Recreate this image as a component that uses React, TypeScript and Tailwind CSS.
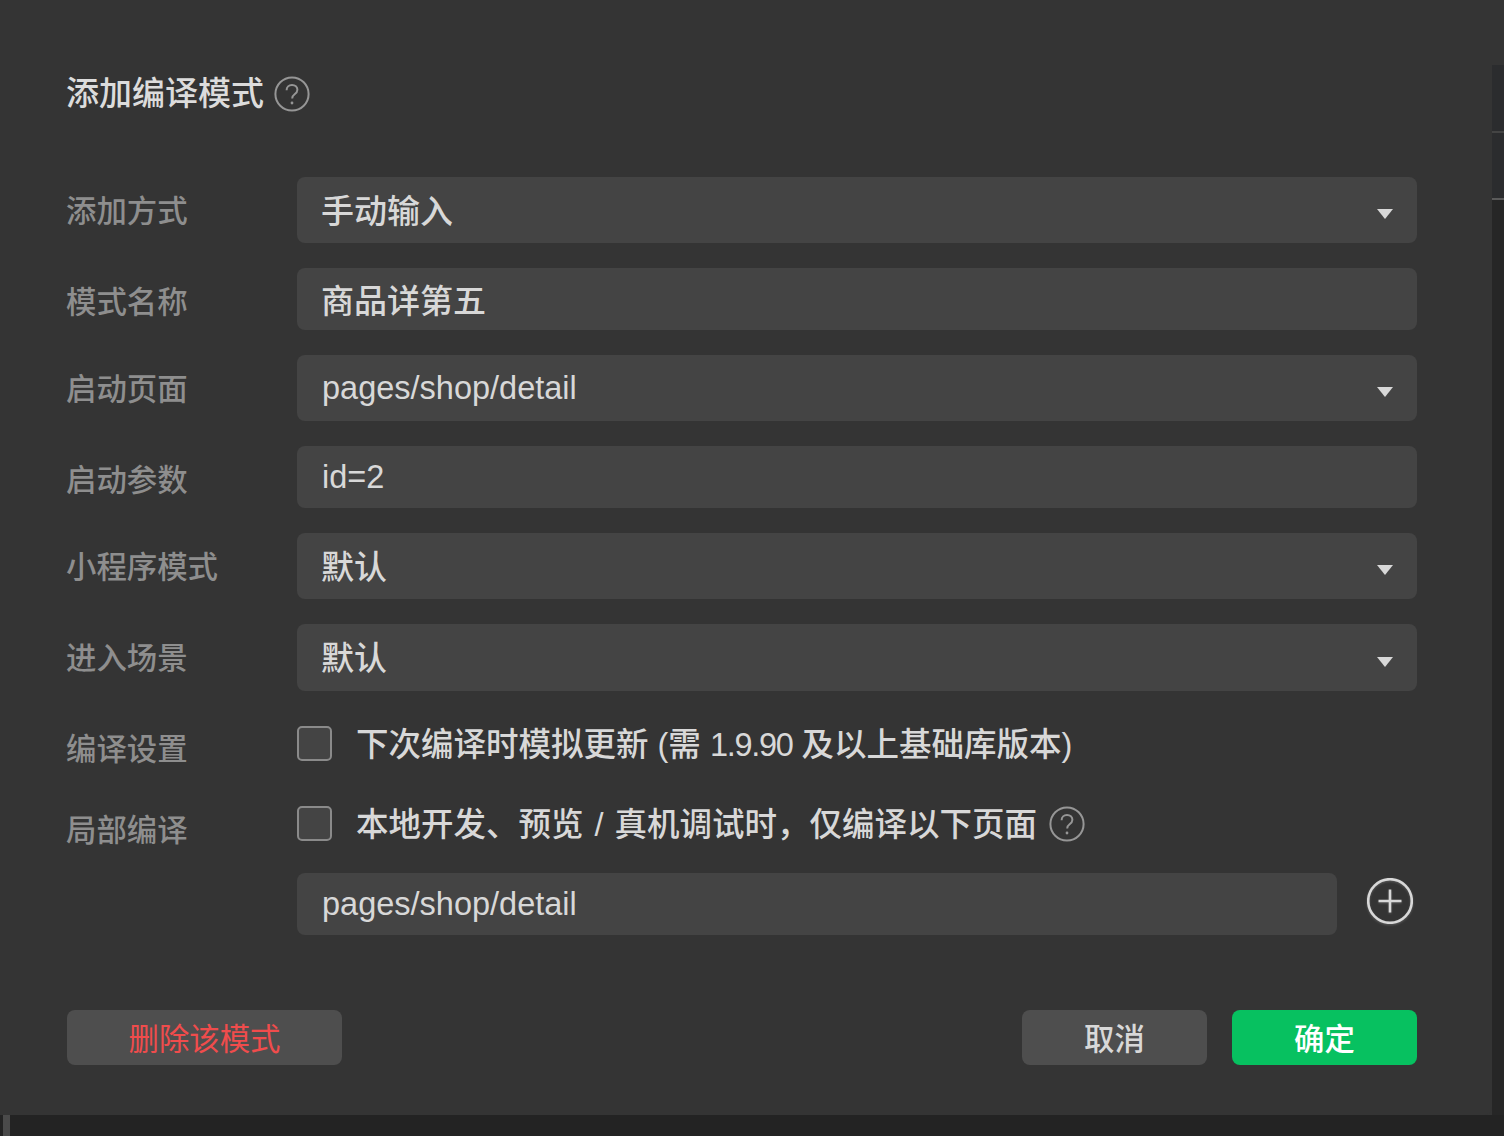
import type { ReactNode } from 'react';

const FONT = "font-['Liberation_Sans','Noto_Sans_CJK_SC',sans-serif]";

function HelpIcon() {
  return (
    <svg width="36" height="36" viewBox="0 0 36 36" fill="none" className="shrink-0">
      <circle cx="18" cy="18" r="16.6" stroke="#969696" strokeWidth="2" />
      <path d="M12.6 14.2c0-3 2.3-5.2 5.4-5.2s5.4 2 5.4 4.8c0 2.2-1.2 3.3-2.8 4.5-1.5 1.1-2.4 2-2.4 4.2" stroke="#969696" strokeWidth="2" />
      <circle cx="18" cy="27" r="1.4" fill="#969696" />
    </svg>
  );
}

function PlusIcon() {
  return (
    <svg width="46" height="46" viewBox="0 0 46 46" fill="none" className="drop-shadow-[0_1px_1px_rgba(255,255,255,0.2)]">
      <circle cx="23" cy="23" r="21.8" stroke="#d8d8d8" strokeWidth="2.6" />
      <path d="M23 11.5v23M11.5 23h23" stroke="#d8d8d8" strokeWidth="2.6" />
    </svg>
  );
}

function Label({ text, className }: { text: string; className: string }) {
  return <div className={`-ml-px w-[231px] shrink-0 text-[30.4px] font-medium leading-[40px] text-[#8e8e8e] ${className}`}>{text}</div>;
}

function SelectRow({ label, value, h, labelClass, valueClass = '' }: { label: string; value: string; h: string; labelClass: string; valueClass?: string }) {
  return (
    <div className="flex">
      <Label text={label} className={labelClass} />
      <div className={`flex flex-1 items-center justify-between rounded-lg bg-[#444444] pl-[25px] pr-6 ${h}`}>
        <span className={`font-medium leading-[40px] text-[#d8d8d8] ${valueClass}`}>{value}</span>
        <span className="mt-2 h-0 w-0 border-x-[8px] border-t-[10px] border-x-transparent border-t-[#d8d8d8]" />
      </div>
    </div>
  );
}

function InputRow({ label, value, labelClass, valueClass = '' }: { label: string; value: string; labelClass: string; valueClass?: string }) {
  return (
    <div className="flex">
      <Label text={label} className={labelClass} />
      <div className="flex h-[62px] flex-1 items-center rounded-lg bg-[#444444] pl-[25px]">
        <span className={`font-medium leading-[40px] text-[#d8d8d8] ${valueClass}`}>{value}</span>
      </div>
    </div>
  );
}

function CheckRow({ label, labelClass, children, help }: { label: string; labelClass: string; children: ReactNode; help?: boolean }) {
  return (
    <div className="flex h-[35px]">
      <Label text={label} className={labelClass} />
      <div className="flex h-[35px] items-center">
        <span className="h-[35px] w-[35px] rounded-[5px] border-2 border-[#8a8a8a] bg-[#444444]" />
        <span className="ml-[24px] whitespace-nowrap pt-[2px] text-[32.5px] font-medium leading-[40px] text-[#d8d8d8]">{children}</span>
        {help && (
          <span className="ml-[12px]">
            <HelpIcon />
          </span>
        )}
      </div>
    </div>
  );
}

export default function App() {
  return (
    <div className={`flex h-[1136px] w-[1504px] flex-col overflow-hidden bg-[#343434] ${FONT}`}>
      <div className="flex h-[1115px]">
        <div className="h-[1115px] w-[1492px] shrink-0 rounded-br-lg bg-[#343434] pl-[67px] pr-[75px] pt-[76px]">
          <div className="flex h-[36px] items-center gap-[10px]">
            <span className="-ml-px text-[33px] font-medium leading-[36px] text-[#dcdcdc]">添加编译模式</span>
            <HelpIcon />
          </div>

          <div className="mt-[65px] flex flex-col gap-[25px]">
            <SelectRow label="添加方式" value="手动输入" h="h-[66px]" labelClass="mt-[14px]" valueClass="-ml-px pt-1 text-[33px]" />
            <InputRow label="模式名称" value="商品详第五" labelClass="mt-[14px]" valueClass="-ml-px pt-[6px] text-[33px]" />
            <SelectRow label="启动页面" value="pages/shop/detail" h="h-[66px]" labelClass="mt-[14px]" valueClass="text-[32.5px]" />
            <InputRow label="启动参数" value="id=2" labelClass="mt-[14px]" valueClass="text-[32.5px]" />
            <SelectRow label="小程序模式" value="默认" h="h-[66px]" labelClass="mt-[14px]" valueClass="-ml-px pt-1 text-[33px]" />
            <SelectRow label="进入场景" value="默认" h="h-[67px]" labelClass="mt-[14px]" valueClass="-ml-px pt-[2px] text-[33px]" />
          </div>

          <div className="mt-[35px] flex flex-col gap-[45px]">
            <CheckRow label="编译设置" labelClass="mt-[3px]">
              下次编译时模拟更新 (需 <span className="tracking-[-1.3px]">1.9.90</span> 及以上基础库版本)
            </CheckRow>
            <CheckRow label="局部编译" labelClass="mt-[4px]" help>
              本地开发、预览 <span className="mx-[2px]">/</span> 真机调试时，仅编译以下页面
            </CheckRow>
          </div>

          <div className="ml-[230px] mt-[32px] flex items-center justify-between">
            <div className="flex h-[62px] w-[1040px] items-center rounded-lg bg-[#444444] pl-[25px]">
              <span className="text-[32.5px] font-medium leading-[40px] text-[#d8d8d8]">pages/shop/detail</span>
            </div>
            <span className="mb-[6px] mr-[4px]">
              <PlusIcon />
            </span>
          </div>

          <div className="mt-[75px] flex items-center">
            <button className="h-[55px] w-[275px] rounded-lg bg-[#4e4e4e] pt-1 text-[30.4px] text-[#f04c4c]">删除该模式</button>
            <button className="ml-auto h-[55px] w-[185px] rounded-lg bg-[#4e4e4e] pt-1 text-[30.4px] font-medium text-[#d8d8d8]">取消</button>
            <button className="ml-[25px] h-[55px] w-[185px] rounded-lg bg-[#07c160] pt-1 text-[30.4px] font-medium text-white">确定</button>
          </div>
        </div>

        {/* whatever sits behind the dialog on the right */}
        <div className="flex flex-1 flex-col bg-[#262626]">
          <div className="h-[65px] bg-[#343434]" />
          <div className="h-[68px] border-b-2 border-[#444444] bg-[#2b2c2e]" />
          <div className="h-[67px] border-b-2 border-[#5a5a5a] bg-[#2b2c2e]" />
        </div>
      </div>
      <div className="flex-1 bg-[#232323] pl-[3px]">
        <div className="h-full w-[7px] bg-[#4a4a4a]" />
      </div>
    </div>
  );
}
